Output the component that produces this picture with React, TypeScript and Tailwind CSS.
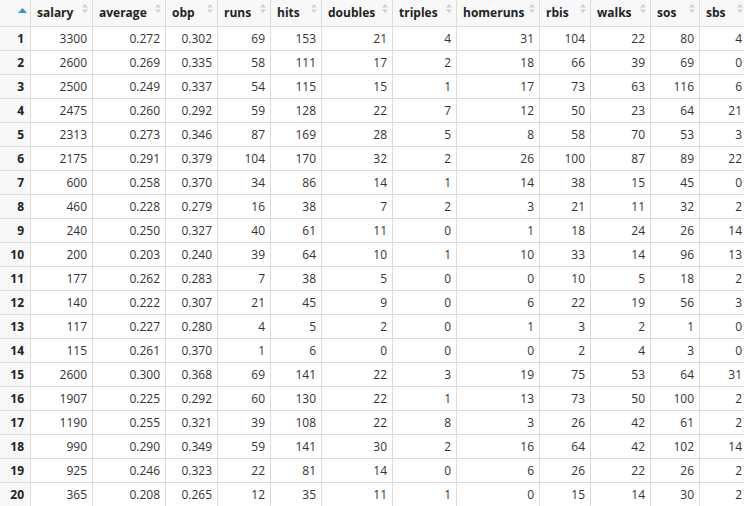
const columns: { name: string; width: number }[] = [
  { name: 'salary', width: 62 },
  { name: 'average', width: 73 },
  { name: 'obp', width: 52 },
  { name: 'runs', width: 53 },
  { name: 'hits', width: 51 },
  { name: 'doubles', width: 71 },
  { name: 'triples', width: 64 },
  { name: 'homeruns', width: 83 },
  { name: 'rbis', width: 51 },
  { name: 'walks', width: 60 },
  { name: 'sos', width: 49 },
  { name: 'sbs', width: 48 },
];

const rows: string[][] = [
  ['3300', '0.272', '0.302', '69', '153', '21', '4', '31', '104', '22', '80', '4'],
  ['2600', '0.269', '0.335', '58', '111', '17', '2', '18', '66', '39', '69', '0'],
  ['2500', '0.249', '0.337', '54', '115', '15', '1', '17', '73', '63', '116', '6'],
  ['2475', '0.260', '0.292', '59', '128', '22', '7', '12', '50', '23', '64', '21'],
  ['2313', '0.273', '0.346', '87', '169', '28', '5', '8', '58', '70', '53', '3'],
  ['2175', '0.291', '0.379', '104', '170', '32', '2', '26', '100', '87', '89', '22'],
  ['600', '0.258', '0.370', '34', '86', '14', '1', '14', '38', '15', '45', '0'],
  ['460', '0.228', '0.279', '16', '38', '7', '2', '3', '21', '11', '32', '2'],
  ['240', '0.250', '0.327', '40', '61', '11', '0', '1', '18', '24', '26', '14'],
  ['200', '0.203', '0.240', '39', '64', '10', '1', '10', '33', '14', '96', '13'],
  ['177', '0.262', '0.283', '7', '38', '5', '0', '0', '10', '5', '18', '2'],
  ['140', '0.222', '0.307', '21', '45', '9', '0', '6', '22', '19', '56', '3'],
  ['117', '0.227', '0.280', '4', '5', '2', '0', '1', '3', '2', '1', '0'],
  ['115', '0.261', '0.370', '1', '6', '0', '0', '0', '2', '4', '3', '0'],
  ['2600', '0.300', '0.368', '69', '141', '22', '3', '19', '75', '53', '64', '31'],
  ['1907', '0.225', '0.292', '60', '130', '22', '1', '13', '73', '50', '100', '2'],
  ['1190', '0.255', '0.321', '39', '108', '22', '8', '3', '26', '42', '61', '2'],
  ['990', '0.290', '0.349', '59', '141', '30', '2', '16', '64', '42', '102', '14'],
  ['925', '0.246', '0.323', '22', '81', '14', '0', '6', '26', '22', '26', '2'],
  ['365', '0.208', '0.265', '12', '35', '11', '1', '0', '15', '14', '30', '2'],
];

function SortArrows() {
  return (
    <svg width="6" height="9" viewBox="0 0 6 9" className="absolute right-[4px] top-[4px]">
      <path d="M3 0 L6 3.5 L0 3.5 Z" fill="#cfcfcf" />
      <path d="M3 9 L6 5.5 L0 5.5 Z" fill="#cfcfcf" />
    </svg>
  );
}

export default function App() {
  return (
    <div
      className="w-[744px] h-[506px] overflow-hidden bg-white text-[12px] text-[#333]"
      style={{ fontFamily: '"Open Sans", "Noto Sans", sans-serif' }}
    >
      <div className="w-max">
        {/* Header */}
        <div className="flex h-[27px] border-b border-[#dcdcdc] bg-[#f8f8f8]">
          <div className="relative w-[31px] shrink-0 border-r border-[#dcdcdc]">
            <svg width="9" height="6" viewBox="0 0 9 6" className="absolute left-[18px] top-[8px]">
              <path d="M4.5 0 L9 5 L0 5 Z" fill="#3a8fd6" />
            </svg>
          </div>
          {columns.map(c => (
            <div
              key={c.name}
              style={{ width: c.width }}
              className="relative shrink-0 border-r border-[#dcdcdc] pl-[6px] pt-[4px] font-bold text-[#222]"
            >
              {c.name}
              <SortArrows />
            </div>
          ))}
        </div>

        {/* Body */}
        {rows.map((r, i) => (
          <div key={i} className="flex h-[24px] border-b border-[#dcdcdc]">
            <div className="w-[31px] shrink-0 border-r border-[#dcdcdc] bg-[#f8f8f8] pr-[6px] text-right font-bold leading-[23px] text-[#222]">
              {i + 1}
            </div>
            {r.map((v, j) => (
              <div
                key={j}
                style={{ width: columns[j].width }}
                className="shrink-0 border-r border-[#dcdcdc] pr-[5px] text-right leading-[23px]"
              >
                {v}
              </div>
            ))}
          </div>
        ))}
      </div>
    </div>
  );
}
